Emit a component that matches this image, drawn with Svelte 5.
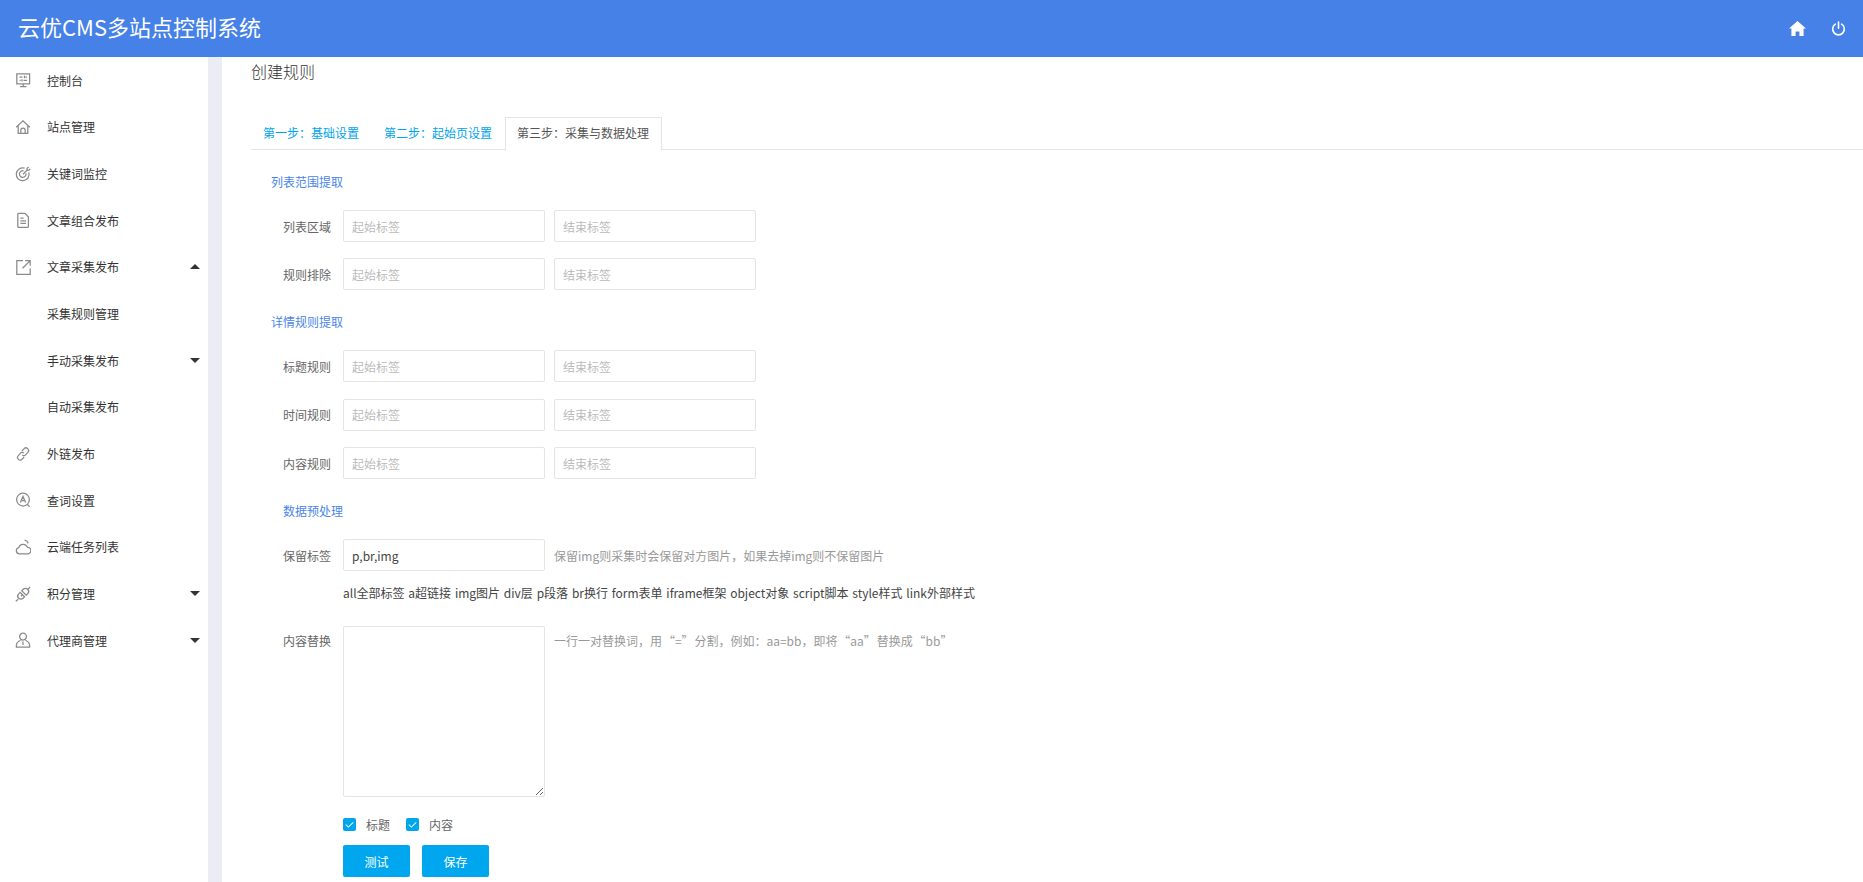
<script>
  const icons = {
    monitor: 'M1.8 1.8h12.8v10H1.8zM4.5 5h3M10.5 5H12M9.5 3.8v2.4M4.5 8.4h1.2M8.5 8.4H12M7 7.2v2.4M8.2 11.8v2.4M5 14.6h6.5',
    home: 'M1.2 8.2 8 1.8l6.8 6.4M3.2 6.8v7.6h9.6V6.8M5.8 14.4v-3a2.2 2.2 0 0 1 4.4 0v3',
    target: 'M13.8 6.4A6.4 6.4 0 1 1 9.6 2.2M11 7.4A3.3 3.3 0 1 1 8.6 4.8M8 8.2l4-4M12 4.2V2.2l1.6-1.2M12 4.2h2l1.2-1.4',
    doc: 'M2.8 2.2q0-.9.9-.9H10l3.4 3.5v9.6q0 .9-.9.9H3.7q-.9 0-.9-.9zM5.4 6h3.2M5.4 8.8h5.6M5.4 11.4h5.6',
    share: 'M8 1.6H1.8v13.8h13.4V9.4M10 1.6h5.2v5.2M15.2 1.6 7.6 9.2',
    link: 'M7 5l2-2.2a2.6 2.6 0 0 1 3.9 3.6l-2 2.3a2.6 2.6 0 0 1-3.7.2M9.2 11l-2 2.2a2.6 2.6 0 0 1-3.9-3.6l2-2.3A2.6 2.6 0 0 1 9 7.1',
    search: 'M8 1.2a6.4 6.4 0 1 0 0 12.8A6.4 6.4 0 0 0 8 1.2zM12.5 12.6l2.2 2.2M5.4 10.6 8 4.4l2.6 6.2M6.2 8.7h3.6',
    cloud: 'M4.5 14.8a3.1 3.1 0 0 1-.8-6.1 4.6 4.6 0 0 1 8.8-.3 3.2 3.2 0 0 1 .3 6.4zM9.6 1.2a4.4 4.4 0 0 1 3.6 3.2',
    points: 'M.8 15.2l2.4-2M15.2.8l-2.2 2.4M5.2 6.4l4.4 4.4-1.5 1.5a3.1 3.1 0 0 1-4.4-4.4zM6.8 4.8l4.4 4.4 1.5-1.5a3.1 3.1 0 0 0-4.4-4.4zM8 8.2 6 10.2',
    agent: 'M8 1.2a3.4 3.4 0 1 0 0 6.8 3.4 3.4 0 0 0 0-6.8zM5.5 8.2C3 9.4 1.4 11 1.4 13.5v1.6h13.2v-1.6c0-2.5-1.6-4.1-4.1-5.3M8 9.5v3.5'
  };
  const menu = [
    { label: '控制台', icon: 'monitor' },
    { label: '站点管理', icon: 'home' },
    { label: '关键词监控', icon: 'target' },
    { label: '文章组合发布', icon: 'doc' },
    { label: '文章采集发布', icon: 'share', caret: 'up' },
    { label: '采集规则管理' },
    { label: '手动采集发布', caret: 'down' },
    { label: '自动采集发布' },
    { label: '外链发布', icon: 'link' },
    { label: '查词设置', icon: 'search' },
    { label: '云端任务列表', icon: 'cloud' },
    { label: '积分管理', icon: 'points', caret: 'down' },
    { label: '代理商管理', icon: 'agent', caret: 'down' }
  ];
  const detailRules = ['标题规则', '时间规则', '内容规则'];
</script>

<div class="page">
  <header class="topbar">
    <div class="brand">云优CMS多站点控制系统</div>
    <div class="top-icons">
      <svg class="home-icon" viewBox="0 0 17 15" aria-hidden="true"><path d="M8.5 0 0 7.6h2.4V15h4.2v-4.6h3.8V15h4.2V7.6H17z" /></svg>
      <svg class="power-icon" viewBox="0 0 16 16" aria-hidden="true"><path d="M4.6 3.4a6.2 6.2 0 1 0 6.8 0M8 1v6.6" /></svg>
    </div>
  </header>

  <div class="body">
    <nav class="sidebar">
      {#each menu as item}
        <div class="menu-item">
          <span class="menu-icon">
            {#if item.icon}
              <svg viewBox="0 0 16 16" aria-hidden="true"><path d={icons[item.icon]} /></svg>
            {/if}
          </span>
          <span class="menu-label">{item.label}</span>
          {#if item.caret}
            <span class="caret {item.caret}"></span>
          {/if}
        </div>
      {/each}
    </nav>

    <main class="content">
      <h1 class="page-title">创建规则</h1>

      <div class="tabs">
        <span class="tab">第一步：基础设置</span>
        <span class="tab">第二步：起始页设置</span>
        <span class="tab active">第三步：采集与数据处理</span>
      </div>

      <div class="section first">列表范围提取</div>
      <div class="row">
        <span class="label">列表区域</span>
        <input class="field" placeholder="起始标签" />
        <input class="field" placeholder="结束标签" />
      </div>
      <div class="row">
        <span class="label">规则排除</span>
        <input class="field" placeholder="起始标签" />
        <input class="field" placeholder="结束标签" />
      </div>

      <div class="section second">详情规则提取</div>
      {#each detailRules as rule}
        <div class="row detail">
          <span class="label">{rule}</span>
          <input class="field" placeholder="起始标签" />
          <input class="field" placeholder="结束标签" />
        </div>
      {/each}

      <div class="section third">数据预处理</div>
      <div class="row keep">
        <span class="label">保留标签</span>
        <input class="field" value="p,br,img" />
        <span class="hint">保留img则采集时会保留对方图片，如果去掉img则不保留图片</span>
      </div>
      <div class="tag-list">all全部标签 a超链接 img图片 div层 p段落 br换行 form表单 iframe框架 object对象 script脚本 style样式 link外部样式</div>
      <div class="row replace">
        <span class="label">内容替换</span>
        <textarea class="area"></textarea>
        <span class="hint tight">一行一对替换词，用 “=” 分割，例如：aa=bb，即将 “aa” 替换成 “bb”</span>
      </div>

      <div class="checks">
        <span class="check"><svg viewBox="0 0 14 14" aria-hidden="true"><path d="M3 7.2l2.8 2.6L11 4.6" /></svg></span>
        <span class="check-label">标题</span>
        <span class="check"><svg viewBox="0 0 14 14" aria-hidden="true"><path d="M3 7.2l2.8 2.6L11 4.6" /></svg></span>
        <span class="check-label">内容</span>
      </div>

      <div class="actions">
        <button class="btn">测试</button>
        <button class="btn">保存</button>
      </div>
    </main>
  </div>
</div>

<style>
  :global(body) {
    margin: 0;
    background: #eaedf3;
    overflow: hidden;
  }
  .page {
    height: 882px;
    overflow: hidden;
    font-family: "Noto Sans CJK SC", "Open Sans", sans-serif;
    font-size: 12px;
    color: #333;
  }
  .topbar {
    height: 57px;
    background: #4581e6;
    display: flex;
    align-items: center;
    justify-content: space-between;
    padding: 0 17px 8px 18px;
    box-sizing: border-box;
    color: #fff;
  }
  .brand {
    font-size: 22px;
    line-height: 32px;
    margin-top: 2px;
  }
  .top-icons {
    display: flex;
    align-items: center;
    gap: 25px;
    margin-top: 8px;
  }
  .home-icon {
    width: 17px;
    height: 15px;
    fill: #fff;
  }
  .power-icon {
    width: 15px;
    height: 15px;
    fill: none;
    stroke: #fff;
    stroke-width: 1.7;
    stroke-linecap: round;
  }
  .body {
    display: flex;
    height: 825px;
  }
  .sidebar {
    width: 208px;
    flex: none;
    background: #fff;
  }
  .menu-item {
    height: 46.67px;
    display: flex;
    align-items: center;
    position: relative;
    padding-left: 15px;
  }
  .menu-icon {
    width: 16px;
    height: 16px;
    margin-right: 16px;
    flex: none;
  }
  .menu-icon svg {
    display: block;
    width: 16px;
    height: 16px;
    fill: none;
    stroke: #8a8a8a;
    stroke-width: 1.25;
  }
  .caret {
    position: absolute;
    left: 190px;
    width: 0;
    height: 0;
    border-left: 5px solid transparent;
    border-right: 5px solid transparent;
  }
  .caret.up {
    border-bottom: 5px solid #333;
  }
  .caret.down {
    border-top: 5px solid #333;
  }
  .content {
    flex: 1;
    margin-left: 14px;
    background: #fff;
    padding-left: 29px;
  }
  .page-title {
    margin: 0;
    font-size: 16px;
    font-weight: 300;
    line-height: 28px;
    color: #333;
  }
  .tabs {
    display: flex;
    gap: 1px;
    margin-top: 32px;
    height: 32px;
    border-bottom: 1px solid #e4e4e4;
  }
  .tab {
    padding: 0 12px;
    line-height: 32px;
    color: #00a5ec;
  }
  .tab.active {
    height: 32px;
    color: #555;
    background: #fff;
    border: 1px solid #e4e4e4;
    border-bottom-color: #fff;
    padding: 0 11px;
    line-height: 30px;
    width: 133px;
  }
  .section {
    color: #4a86e8;
    line-height: 20px;
  }
  .section.first,
  .section.second {
    margin: 22px 0 0 20px;
    height: 38px;
  }
  .section.third {
    margin: 22px 0 0 32px;
    height: 38px;
  }
  .row {
    display: flex;
    align-items: center;
    height: 32px;
    margin-bottom: 16px;
  }
  .row.detail {
    margin-bottom: 16.5px;
  }
  .label {
    width: 80px;
    margin-right: 12px;
    text-align: right;
    color: #666;
    flex: none;
  }
  .field {
    width: 202px;
    height: 32px;
    box-sizing: border-box;
    border: 1px solid #e4e4e4;
    border-radius: 2px;
    padding: 0 8px;
    margin-right: 9px;
    font: inherit;
    color: #444;
    background: #fff;
    outline: none;
    flex: none;
  }
  .field::placeholder {
    color: #bbb;
    opacity: 1;
  }
  .hint {
    color: #999;
  }
  .hint.tight {
    word-spacing: -1.8px;
  }
  .row.keep {
    margin-bottom: 0;
  }
  .tag-list {
    margin: 11px 0 0 92px;
    line-height: 22px;
    word-spacing: 1.1px;
    color: #444;
  }
  .row.replace {
    margin: 22px 0 0;
    height: 171px;
    align-items: flex-start;
  }
  .row.replace .label,
  .row.replace .hint {
    line-height: 30px;
  }
  .area {
    width: 202px;
    height: 171px;
    box-sizing: border-box;
    border: 1px solid #e4e4e4;
    border-radius: 2px;
    margin: 0 9px 0 0;
    padding: 6px 8px;
    font: inherit;
    background: #fff;
    outline: none;
    flex: none;
  }
  .checks {
    display: flex;
    align-items: center;
    margin: 20px 0 0 92px;
    height: 14px;
  }
  .check {
    width: 13px;
    height: 13px;
    border-radius: 2px;
    background: #00a5ec;
    flex: none;
  }
  .check svg {
    display: block;
    width: 13px;
    height: 13px;
    fill: none;
    stroke: #dff5ff;
    stroke-width: 1.2;
  }
  .check-label {
    margin-left: 10px;
    width: 40px;
    color: #666;
  }
  .actions {
    display: flex;
    gap: 12px;
    margin: 14px 0 0 92px;
  }
  .btn {
    width: 67px;
    height: 32px;
    border: none;
    border-radius: 2px;
    background: #00a7ee;
    color: #fff;
    font: inherit;
    padding: 0;
  }
</style>
